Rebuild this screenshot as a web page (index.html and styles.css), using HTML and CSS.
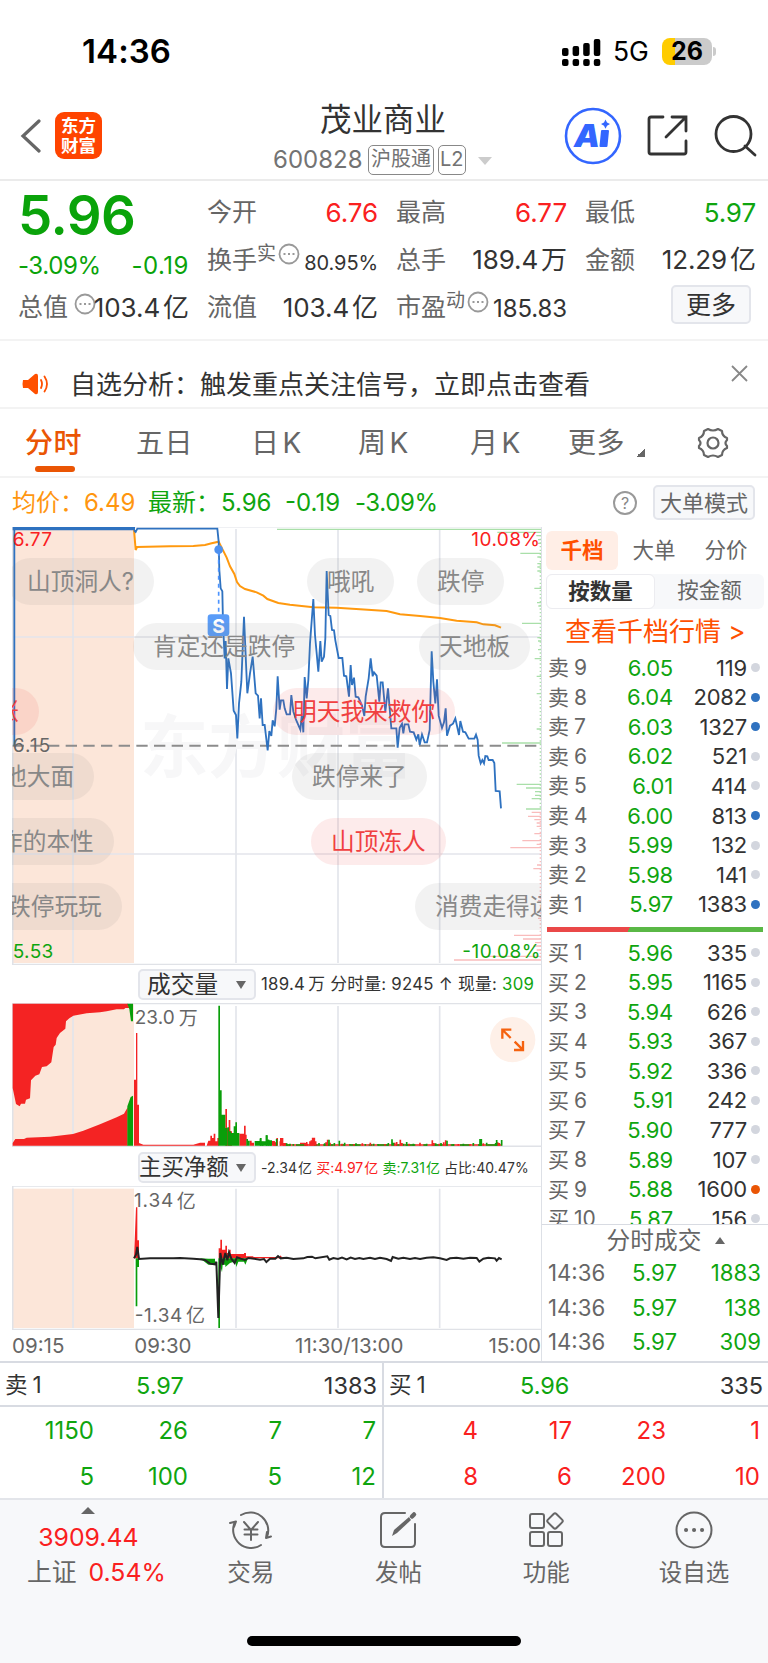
FILE: index.html
```html
<!DOCTYPE html>
<html lang="zh-CN">
<head>
  <meta charset="UTF-8" />
  <meta name="viewport" content="width=device-width, initial-scale=1.0"/>
  <title>茂业商业 600828</title>
  <link rel="stylesheet" href="styles.css">
</head>
<body>
  <div class="status-bar">
    <span class="clock">14:36</span>
    <svg class="signal" width="39" height="28" viewBox="0 0 39 28">
      <rect x="0" y="10" width="6.5" height="8" rx="2"/><rect x="10.6" y="8" width="6.5" height="10" rx="2"/><rect x="21.2" y="5" width="6.5" height="13" rx="2"/><rect x="31.8" y="1" width="6.5" height="17" rx="2"/>
      <rect x="0" y="21" width="6.5" height="7" rx="2"/><rect x="10.6" y="21" width="6.5" height="7" rx="2"/><rect x="21.2" y="21" width="6.5" height="7" rx="2"/><rect x="31.8" y="21" width="6.5" height="7" rx="2"/>
    </svg>
    <span class="network">5G</span>
    <span class="battery">26</span>
    <span class="battery-tip"></span>
  </div>

  <header class="header">
    <svg class="back" width="22" height="34" viewBox="0 0 22 34"><path d="M19 2 3 17 19 32"/></svg>
    <div class="logo">东方<br>财富</div>
    <div class="title">
      <h1>茂业商业</h1>
      <div class="code"><span class="code-num">600828</span><span class="badge">沪股通</span><span class="badge">L2</span><i class="tri-down"></i></div>
    </div>
    <svg class="ai" width="58" height="58" viewBox="0 0 58 58">
      <circle cx="29" cy="29" r="27" fill="none" stroke="#3366ff" stroke-width="2.6"/>
      <text x="10" y="40" textLength="26" lengthAdjust="spacingAndGlyphs">A</text>
      <path d="M38 24h6l-1.500 15h-6z" fill="#3366ff" stroke="#3366ff" stroke-width="2" stroke-linejoin="round"/>
      <path d="M41.500 12.500l1.500 3 3 1.600-3 1.600-1.500 3-1.500-3-3-1.600 3-1.600z" fill="#3366ff"/>
    </svg>
    <svg class="share" width="42" height="42" viewBox="0 0 42 42"><path d="M16 2H4q-2 0-2 2V37q0 2 2 2H37q2 0 2-2V26M25 2H39V16M39 2 19 22"/></svg>
    <svg class="search" width="43" height="43" viewBox="0 0 43 43"><circle cx="19.500" cy="20" r="17.500"/><path d="M31 32 41 41"/></svg>
  </header>

  <section class="quote">
    <div class="price-box">
      <div class="price">5.96</div>
      <div class="change"><span>-3.09%</span><span class="amount">-0.19</span></div>
    </div>
    <div class="item"><label>今开</label><b class="red">6.76</b></div>
    <div class="item"><label>最高</label><b class="red">6.77</b></div>
    <div class="item"><label>最低</label><b class="green">5.97</b></div>
    <div class="item"><label>换手<sup>实</sup></label><svg class="dots" width="22" height="22" viewBox="0 0 22 22"><circle cx="11" cy="11" r="9.500"/><path d="M5.500 11h2M10 11h2M14.500 11h2"/></svg><b class="small">80.95%</b></div>
    <div class="item"><label>总手</label><b>189.4<u>万</u></b></div>
    <div class="item"><label>金额</label><b>12.29<u>亿</u></b></div>
    <div class="item"><label>总值</label><svg class="dots value-dots" width="22" height="22" viewBox="0 0 22 22"><circle cx="11" cy="11" r="9.500"/><path d="M5.500 11h2M10 11h2M14.500 11h2"/></svg><b>103.4<u>亿</u></b></div>
    <div class="item"><label>流值</label><b>103.4<u>亿</u></b></div>
    <div class="item"><label>市盈<sup>动</sup></label><svg class="dots" width="22" height="22" viewBox="0 0 22 22"><circle cx="11" cy="11" r="9.500"/><path d="M5.500 11h2M10 11h2M14.500 11h2"/></svg><b class="pe">185.83</b></div>
    <div class="item last"><button class="more">更多</button></div>
  </section>

  <section class="notice">
    <svg width="27" height="22" viewBox="0 0 27 22"><path d="M1 7h5l7-6q3-1 3 2v16q0 3-3 2l-7-6H1q-1-4 0-8z" fill="#ff5000"/><path d="M19 7q2 4 0 8M22.500 3.500q5 7.500 0 15" fill="none" stroke="#ff5000" stroke-width="1.800" stroke-linecap="round"/></svg>
    <p>自选分析：触发重点关注信号，立即点击查看</p>
    <svg class="close" width="17" height="17" viewBox="0 0 17 17"><path d="M1 1 16 16M16 1 1 16"/></svg>
  </section>

  <nav class="tabs">
    <a class="active">分时</a><a>五日</a><a>日<em>K</em></a><a>周<em>K</em></a><a>月<em>K</em></a><a>更多</a><i class="corner"></i>
    <svg class="gear" width="34" height="32" viewBox="0 0 34 32"><path d="M12 2Q17 5 22 2L26 4Q26 9 31 11V13Q28 16 31 19V21Q26 23 26 28L22 30Q17 27 12 30L8 28Q8 23 3 21V19Q6 16 3 13V11Q8 9 8 4Z"/><circle cx="17" cy="16" r="5.500"/></svg>
  </nav>

  <div class="avg-line">
    <span class="orange">均价：</span><span class="orange avg">6.49</span>
    <span class="green">最新：</span><span class="green now">5.96</span><span class="green diff">-0.19</span><span class="green pct">-3.09%</span>
    <span class="help">?</span>
    <button class="mode">大单模式</button>
  </div>

  <main class="main">
    <div class="charts">
      <div class="price-chart">
        <svg width="530" height="438" viewBox="36 36 1590 1314">
          <rect x="38" y="36" width="364" height="1308" fill="#fce6d9"/>
          <path class="grid" d="M219 42V1344M708 42V1344M1014 42V1344M1319 42V1344M38 366H1622M38 1017H1622"/>
          <path class="frame" d="M36 35H1626M38 35V1350M36 1349H1626"/>
          <text class="watermark" x="420" y="770">东方财富</text>
          <path class="mid" d="M38 692H1622"/>
          <g transform="translate(600 0)">
            <path class="depth-green" d="M231 43H1025M892 52H1025M961 115H1025M1003 220H1025M966 325H1025M1004 431H1025M1010 484H1025M1010 536H1025M1010 642H1025M906 684H1025M950 808H1025M978 819H1025M1005 830H1025M1005 841H1025M995 851H1025M978 882H1025M1009 62H1025M1014 74H1025M1014 85H1025M1012 126H1025M1012 146H1025M1012 156H1025M1012 168H1025M1011 263H1025M1015 273H1025M1012 368H1025M1014 378H1025M1014 404H1025"/>
            <path class="depth-dots" d="M1022 60V880"/>
            <path class="depth-red" d="M995 892H1025M984 904H1025M1003 914H1025M1010 924H1025M1010 934H1025M1003 956H1025M967 977H1025M1010 988H1025M931 998H1025M1011 1050H1025M1000 1061H1025M1014 1146H1025M1014 1157H1025M1014 1210H1025M942 1261H1025M969 1272H1025M1005 1283H1025M1000 1293H1025M1010 1305H1025M860 1324H1025M762 1335H1025"/>
            <path class="depth-dots-red" d="M1022 895V1330"/>
          </g>
          <path class="avg-path" d="M402 44 407 105 411 96 510 94 580 93 615 90 635 85 656 80 665 98 680 128 690 154 703 177 711 201 720 213 735 222 770 232 790 242 802 252 835 264 870 269 905 273 940 277 1010 278 1080 283 1160 288 1200 298 1260 303 1320 309 1370 317 1430 322 1450 328 1485 331 1503 338"/>
          <path class="price-path" d="M43 692V44"/>
          <path class="auction-path" d="M38 41H405"/>
          <path class="price-path" d="M402 46 407 51 412 41H652L656 80 658 165 662 220 667 229 669 325 674 430 677 378 681 522 685 430 693 475 701 587 708 600 712 670 717 566 724 500 732 305 738 445 742 535 750 475 758 425 767 535 774 542 779 610 783 550 788 630 794 630 803 706 808 648 814 663 818 616 824 634 829 580 833 484 839 584 843 556 850 556 854 580 860 598 870 598 874 540 880 590 888 614 901 644 906 596 910 652 914 486 920 550 925 495 930 385 940 252 945 360 955 470 961 378 965 440 972 425 976 370 980 168 986 300 991 303 996 345 1002 346 1006 376 1016 429 1027 429 1032 482 1039 484 1047 545 1052 450 1056 510 1062 488 1067 545 1075 547 1086 571 1093 603 1097 545 1106 490 1112 430 1118 484 1122 472 1130 482 1138 560 1142 502 1148 502 1156 590 1164 520 1174 640 1189 640 1193 698 1199 638 1206 626 1210 655 1214 628 1225 628 1230 650 1241 652 1249 674 1255 658 1259 690 1266 658 1274 682 1281 682 1289 645 1295 409 1300 500 1306 565 1311 493 1316 602 1326 639 1332 622 1337 580 1341 662 1350 632 1359 626 1366 610 1377 660 1381 618 1389 650 1396 652 1406 671 1423 671 1428 659 1433 675 1436 722 1442 745 1447 735 1452 745 1456 723 1462 724 1466 735 1478 735 1483 744 1487 828 1499 829 1503 880"/>
          <path d="M656 110V300" stroke="#4d94ff" stroke-width="5" stroke-dasharray="12 12"/>
          <circle cx="656" cy="104" r="13" fill="#4d90f0"/>
          <rect x="623" y="298" width="65" height="65" rx="10" fill="#5a9cf8"/>
          <text class="sell-flag" x="656" y="353">S</text>
          <text class="lab" x="38" y="92" fill="#fa2020" textLength="118">6.77</text>
          <text class="lab" x="38" y="710" fill="#666" textLength="113">6.15</text>
          <text class="lab" x="38" y="1328" fill="#0fa50f" textLength="122">5.53</text>
          <text class="lab" x="1414" y="92" fill="#fa2020" textLength="206">10.08%</text>
          <text class="lab" x="1387" y="1328" fill="#0fa50f" textLength="234">-10.08%</text>
        </svg>
        <span class="danmu d1">山顶洞人?</span>
        <span class="danmu d2">哦吼</span>
        <span class="danmu d3">跌停</span>
        <span class="danmu d4">肯定还是跌停</span>
        <span class="danmu d5">天地板</span>
        <span class="danmu hot d6">涨</span>
        <span class="danmu hot d7">明天我来救你</span>
        <span class="danmu d8">他大面</span>
        <span class="danmu d9">跌停来了</span>
        <span class="danmu d10">作的本性</span>
        <span class="danmu hot d11">山顶冻人</span>
        <span class="danmu d12">跌停玩玩</span>
        <span class="danmu d13">消费走得远</span>
      </div>

      <div class="sub-bar">
        <button class="select"><span>成交量</span><i></i></button>
        <p class="vol-info">189.4<u>万</u> 分时量: 9245 ↑ 现量: <span class="green">309</span></p>
      </div>
      <div class="vol-chart">
        <svg width="530" height="144" viewBox="36 130 1590 432">
          <rect x="38" y="132" width="364" height="426" fill="#fce6d9"/>
          <path class="grid" d="M219 132V558M708 139V558M1014 139V558M1319 139V558"/>
          <path class="frame" d="M38 130V560M36 131H1626M36 560H1626"/>
          <path class="fill-red" d="M38 132H384L388 145 376 145 372 149 350 149 320 155 300 158 260 161 220 168 208 176 198 185 196 207 180 220 170 235 167 255 161 262 154 308 140 320 126 322 118 344 106 348 93 362 90 416 78 420 75 432 63 432 59 440 48 433 38 385ZM38 558V550L46 538 72 538 80 534 150 531 219 523 250 513 300 494 350 473 372 462 383 443V558Z"/>
          <path class="fill-green" d="M382 132H399V185H393L388 148ZM382 558V440L392 412 399 408V558Z"/>
          <path class="fill-red" d="M402 558V360H408V220H412V435H417V550L430 555H580L600 549H615V558ZM620 558 625 543 631 543V528H636V535H641V522H646V545H652V535H657V558ZM676 558V448H681V505H686V481H691V515H696V558ZM718 558V522H732V498H737V525H740V558ZM749 558V543H755V549H762V558ZM816 558V544H824V549H829V535H834V558ZM840 558V535H850V550H860V558ZM900 558V549H915V552H925V558Z"/>
          <path class="fill-green" d="M655 558V138H660V392H665V465H676V505H681V558ZM682 558V503H687V515H693V520H701V500H706V488H711V520H718V558ZM739 558V538H744V543H749V558ZM764 558V544H780V535H784V548H797V528H802V540H807V548H814V558ZM779 558V537H784V545H797V527H803V542H816V558Z"/>
          <path class="base-red" d="M850 556H1505"/><path class="base-green" d="M860 556H1505"/>
          <path class="bar-red" d="M822 558V544M827 558V548M841 558V545M850 558V550M915 558V550M920 558V547M930 558V545M934 558V542M938 558V534M943 558V534M947 558V545M978 558V548M983 558V540M990 558V549M1026 558V552M1062 558V553M1087 558V551M1111 558V549M1155 558V553M1184 558V549M1190 558V547M1201 558V540M1206 558V550M1227 558V552M1260 558V549M1297 558V542M1302 558V550M1318 558V552M1331 558V548M1337 558V542M1375 558V553M1410 558V553M1450 558V551M1493 558V548M1498 558V550"/>
          <path class="bar-green" d="M782 558V535M788 558V546M800 558V527M806 558V540M812 558V545M830 558V538M860 558V551M870 558V552M880 558V553M957 558V550M974 558V551M987 558V540M1003 558V550M1018 558V543M1034 558V549M1050 558V553M1068 558V551M1096 558V553M1121 558V552M1134 558V553M1165 558V550M1176 558V539M1180 558V549M1211 558V552M1220 558V547M1240 558V552M1280 558V552M1307 558V551M1323 558V550M1341 558V543M1360 558V553M1390 558V552M1420 558V550M1440 558V538M1444 558V538M1460 558V549M1487 558V550M1490 558V541M1505 558V541"/>
          <text class="lab gray" x="404" y="194" textLength="120">23.0</text><text class="lab gray" x="536" y="196">万</text>
          <circle cx="1538" cy="240" r="68" fill="#fef0e8"/>
          <path class="expand" d="M1507 237V210H1534M1508 211 1532 235M1544 246 1568 270M1542 271H1569V244"/>
        </svg>
      </div>

      <div class="sub-bar">
        <button class="select tight"><span>主买净额</span><i></i></button>
        <p class="net-info">-2.34<u>亿</u> <span class="red">买:4.97<u>亿</u></span> <span class="green">卖:7.31<u>亿</u></span> 占比:40.47%</p>
      </div>
      <div class="net-chart">
        <svg width="530" height="144" viewBox="36 679 1590 432">
          <rect x="38" y="687" width="364" height="418" fill="#fce6d9"/>
          <path class="grid" d="M219 687V1105M708 687V1105M1014 687V1105M1319 687V1105"/>
          <path class="frame" d="M38 679V1111M36 679H1626M36 1110H1626"/>
          <path class="fill-red" d="M402 896 408 743H412V842H417V896ZM656 896V866H661V840H666V870H676V858H681V880H687V870H692V883H732V880H738V890H760V892H840V887L850 896Z"/>
          <path class="fill-green" d="M407 896V1040H412V922H417V896ZM600 896 625 897H645V915H625ZM655 896V1105H660V915L666 938 668 915H676V922L690 910 706 905 709 922 715 906 732 906 736 915 744 896Z"/>
          <path class="net-line" d="M402 896 408 885 412 862 417 898 450 896 520 896 540 895 580 897 600 899 615 901 630 912 645 914 649 906 655 1075 661 880 668 915 676 880 682 902 687 878 694 897 704 910 711 893 722 897 735 901 745 895 780 900 792 898 799 907 810 897 826 897 834 889 842 896 860 894 880 898 910 896 922 892 936 891 946 896 982 890 988 900 1000 895 1014 898 1026 894 1040 899 1052 894 1065 898 1078 895 1090 898 1110 894 1125 898 1140 894 1160 898 1173 904 1178 892 1195 897 1210 894 1230 898 1245 895 1260 898 1280 894 1300 893 1320 896 1340 901 1350 896 1370 894 1390 897 1410 894 1430 895 1438 906 1450 897 1465 894 1485 896 1490 903 1497 895 1505 899"/>
          <text class="lab gray" x="402" y="743" textLength="118">1.34</text><text class="lab gray" x="530" y="745">亿</text>
          <text class="lab gray" x="404" y="1086" textLength="143">-1.34</text><text class="lab gray" x="558" y="1088">亿</text>
        </svg>
      </div>
      <div class="axis"><span>09:15</span><span class="open">09:30</span><span class="noon">11:30/13:00</span><span>15:00</span></div>
    </div>

    <aside class="book">
      <div class="book-tabs"><a class="active">千档</a><a>大单</a><a>分价</a></div>
      <div class="segment"><a class="active">按数量</a><a>按金额</a></div>
      <a class="deep-link">查看千档行情 &gt;</a>
      <ul class="levels">
        <li><span>卖<q>9</q></span><b>6.05</b><em>119</em><i></i></li>
        <li><span>卖<q>8</q></span><b>6.04</b><em>2082</em><i class="blue"></i></li>
        <li><span>卖<q>7</q></span><b>6.03</b><em>1327</em><i class="blue"></i></li>
        <li><span>卖<q>6</q></span><b>6.02</b><em>521</em><i></i></li>
        <li><span>卖<q>5</q></span><b>6.01</b><em>414</em><i></i></li>
        <li><span>卖<q>4</q></span><b>6.00</b><em>813</em><i class="blue"></i></li>
        <li><span>卖<q>3</q></span><b>5.99</b><em>132</em><i></i></li>
        <li><span>卖<q>2</q></span><b>5.98</b><em>141</em><i></i></li>
        <li><span>卖<q>1</q></span><b>5.97</b><em>1383</em><i class="blue"></i></li>
      </ul>
      <div class="ratio"></div>
      <ul class="levels bids">
        <li><span>买<q>1</q></span><b>5.96</b><em>335</em><i></i></li>
        <li><span>买<q>2</q></span><b>5.95</b><em>1165</em><i></i></li>
        <li><span>买<q>3</q></span><b>5.94</b><em>626</em><i></i></li>
        <li><span>买<q>4</q></span><b>5.93</b><em>367</em><i></i></li>
        <li><span>买<q>5</q></span><b>5.92</b><em>336</em><i></i></li>
        <li><span>买<q>6</q></span><b>5.91</b><em>242</em><i></i></li>
        <li><span>买<q>7</q></span><b>5.90</b><em>777</em><i></i></li>
        <li><span>买<q>8</q></span><b>5.89</b><em>107</em><i></i></li>
        <li><span>买<q>9</q></span><b>5.88</b><em>1600</em><i class="hot"></i></li>
        <li><span>买<q>10</q></span><b>5.87</b><em>156</em><i></i></li>
      </ul>
      <div class="deal-title">分时成交<i></i></div>
      <ul class="deals">
        <li><span>14:36</span><b>5.97</b><em>1883</em></li>
        <li><span>14:36</span><b>5.97</b><em>138</em></li>
        <li><span>14:36</span><b>5.97</b><em>309</em></li>
      </ul>
    </aside>
  </main>

  <section class="queue">
    <div class="side">
      <div class="side-head"><span>卖<q>1</q></span><b>5.97</b><em>1383</em></div>
      <div class="cells green"><span>1150</span><span>26</span><span>7</span><span>7</span><span>5</span><span>100</span><span>5</span><span>12</span></div>
    </div>
    <div class="side">
      <div class="side-head"><span>买<q>1</q></span><b>5.96</b><em>335</em></div>
      <div class="cells red"><span>4</span><span>17</span><span>23</span><span>1</span><span>8</span><span>6</span><span>200</span><span>10</span></div>
    </div>
  </section>

  <footer class="toolbar">
    <div class="index">
      <i></i>
      <div class="red">3909.44</div>
      <div><span>上证</span><span class="red idx-pct">0.54%</span></div>
    </div>
    <div class="tool">
      <svg width="44" height="40" viewBox="0 0 44 40"><path d="M12 5A18 18 0 0 1 38 27M32 35A18 18 0 0 1 6 12M1 13 7 11.500 5 17M37 28 42 26.500M38 22 37 28"/><path d="M15 12 22 20 29 12M22 20V30M15.500 19.500H28.500M15.500 24.500H28.500"/></svg>
      <span>交易</span>
    </div>
    <div class="tool">
      <svg width="44" height="40" viewBox="0 0 44 40"><path d="M29 3H9Q5 3 5 7V33Q5 37 9 37H35Q39 37 39 33V14"/><path d="M16 26 18 20 33 7 35 10 21 23Z" fill="#666" stroke="none"/><path d="M36 6.500 38 4.500" stroke-width="4.500"/></svg>
      <span>发帖</span>
    </div>
    <div class="tool">
      <svg width="44" height="40" viewBox="0 0 44 40"><rect x="6" y="4" width="14" height="14" rx="2"/><rect x="6" y="22" width="14" height="14" rx="2"/><rect x="24" y="22" width="14" height="14" rx="2"/><rect x="25" y="5" width="12" height="12" rx="2" transform="rotate(45 31 11)"/></svg>
      <span>功能</span>
    </div>
    <div class="tool">
      <svg width="44" height="40" viewBox="0 0 44 40"><circle cx="22" cy="20" r="17.500"/><path d="M14 20h.1M22 20h.1M30 20h.1" stroke-width="4"/></svg>
      <span>设自选</span>
    </div>
  </footer>
  <div class="home"><span></span></div>
</body>
</html>
```
FILE: styles.css
```css
* {
  box-sizing: border-box;
}
body {
  margin: 0;
  width: 768px;
  height: 1663px;
  overflow: hidden;
  background: #fff;
  color: #333;
  font-family: Inter, "Noto Sans CJK SC", sans-serif;
  font-size: 24px;
  line-height: 1;
}
h1, p, ul {
  margin: 0;
  padding: 0;
  font-weight: normal;
}
ul {
  list-style: none;
}
b, em, i, u {
  font-weight: normal;
  font-style: normal;
  text-decoration: none;
}
u {
  margin-left: 3px;
}
q {
  quotes: none;
  margin-left: 5px;
}
button {
  padding: 0;
  border: 2px solid #e3e5eb;
  border-radius: 5px;
  background: #f7f8fa;
  color: #333;
  font-family: inherit;
  line-height: 1;
}
svg {
  display: block;
  flex: none;
}
.red {
  color: #fa2020;
}
.green {
  color: #0fa50f;
}
.orange {
  color: #ff960f;
}

/* status bar */
.status-bar {
  display: flex;
  align-items: center;
  height: 100px;
  padding: 3px 52px 0 82px;
  color: #000;
}
.clock {
  flex: 1;
  font-size: 33px;
  font-weight: 600;
  letter-spacing: 0.1px;
}
.signal {
  margin-right: 12px;
}
.network {
  width: 49px;
  font-size: 26.500px;
}
.battery {
  width: 50px;
  height: 27px;
  border-radius: 8px;
  background: linear-gradient(90deg, #ffcc00 13px, #cbcbcb 13px);
  font-size: 25px;
  font-weight: 700;
  line-height: 27px;
  text-align: center;
}
.battery-tip {
  width: 3px;
  height: 9px;
  margin-left: 1px;
  border-radius: 0 3px 3px 0;
  background: #cbcbcb;
}

/* header */
.header {
  display: flex;
  align-items: center;
  height: 81px;
  padding-left: 20px;
  border-bottom: 2px solid #ebebeb;
}
.back {
  margin-top: -8px;
  fill: none;
  stroke: #666;
  stroke-width: 3.2;
  stroke-linecap: round;
}
.logo {
  width: 47px;
  height: 47px;
  margin: -9px 0 0 13px;
  padding-top: 4px;
  border-radius: 9px;
  background: #ff4400;
  color: #fff;
  font-size: 17.500px;
  font-weight: 700;
  line-height: 20px;
  text-align: center;
}
.title {
  width: 462px;
  padding-left: 171px;
  margin-top: 1px;
}
h1 {
  padding-left: 47px;
  font-size: 31.500px;
  line-height: 40px;
}
.code {
  display: flex;
  align-items: center;
  height: 41px;
  color: #737373;
}
.code-num {
  width: 95px;
  font-size: 24px;
}
.badge {
  height: 30px;
  margin-right: 4px;
  padding: 0 2px;
  border: 1.500px solid #888;
  border-radius: 5px;
  font-size: 20px;
  line-height: 27px;
}
.badge:nth-child(3) {
  padding: 0 1px;
}
.tri-down {
  margin: 1px 0 0 8px;
  border: 7px solid transparent;
  border-top: 8px solid #ccc;
  border-bottom: 0;
}
.ai {
  margin-top: -8px;
}
.ai text {
  font-size: 31px;
  font-weight: 900;
  font-style: italic;
  fill: #3366ff;
}
.share, .search {
  margin: -8px 0 0 25px;
  fill: none;
  stroke: #333;
  stroke-width: 2.800;
  stroke-linecap: round;
}

/* quote */
.quote {
  display: grid;
  grid-template-columns: repeat(4, 171px);
  grid-template-rows: repeat(3, 47.500px);
  column-gap: 18px;
  height: 160px;
  padding: 8px 0 0 18px;
  border-bottom: 2px solid #f3f3f3;
}
.price-box {
  grid-row: span 2;
  color: #0aa30a;
}
.price {
  height: 56px;
  font-size: 54.500px;
  font-weight: 600;
  line-height: 53px;
  letter-spacing: -0.5px;
}
.change {
  display: flex;
  justify-content: space-between;
  line-height: 42px;
  letter-spacing: -0.4px;
}
.amount {
  letter-spacing: 0.5px;
}
.item {
  display: flex;
  align-items: center;
}
.item label {
  flex: none;
  font-size: 25px;
  color: #666;
  white-space: nowrap;
}
.item sup {
  font-size: 19px;
  line-height: 0;
  vertical-align: 9px;
}
.item b {
  margin-left: auto;
  font-size: 26px;
  letter-spacing: -0.1px;
  white-space: nowrap;
}
.item .small {
  font-size: 20px;
  padding-top: 5px;
}
.item .pe {
  font-size: 24px;
  padding-top: 3px;
}
.dots {
  margin: -12px 0 0 2px;
  fill: none;
  stroke: #999;
  stroke-width: 1.800;
}
.value-dots {
  margin: -8px -5px 0 6px;
}
.last {
  justify-content: flex-end;
}
.more {
  width: 80px;
  height: 39px;
  margin: -6px 5px 0 0;
  padding-top: 2px;
  font-size: 25px;
}

/* notice */
.notice {
  display: flex;
  align-items: center;
  height: 68px;
  padding: 19px 20px 0 22px;
  border-bottom: 2px solid #f3f3f3;
}
.notice p {
  flex: 1;
  padding: 2px 0 0 21px;
  font-size: 26px;
}
.close {
  margin-top: -21px;
  fill: none;
  stroke: #888;
  stroke-width: 1.800;
}

/* tabs */
.tabs {
  display: flex;
  align-items: center;
  height: 69px;
  padding-left: 25px;
  border-bottom: 2px solid #f3f3f3;
  color: #666;
  font-size: 28px;
}
.tabs a {
  width: 114px;
  line-height: 56px;
  letter-spacing: 0.5px;
}
.tabs a:nth-child(2) {
  width: 112px;
  margin-left: -3px;
}
.tabs a:nth-child(3) {
  width: 107px;
  margin-left: 3px;
}
.tabs a:nth-child(4) {
  width: 112px;
}
.tabs a:nth-child(5) {
  width: 98px;
}
.tabs a:nth-child(6) {
  width: 68px;
}
.tabs em {
  margin-left: 3px;
}
.tabs .active {
  position: relative;
  color: #ea5504;
  font-weight: 500;
}
.tabs .active::after {
  content: "";
  position: absolute;
  left: 10px;
  bottom: -1px;
  width: 40px;
  height: 6px;
  border-radius: 3px;
  background: #ea5504;
}
.corner {
  width: 9px;
  height: 9px;
  margin-top: 20px;
  background: linear-gradient(135deg, transparent 50%, #666 50%);
}
.gear {
  margin-left: 51px;
  fill: none;
  stroke: #666;
  stroke-width: 2.200;
  stroke-linejoin: round;
}

/* average line */
.avg-line {
  display: flex;
  align-items: center;
  height: 49px;
  padding: 0 13px 0 12px;
  font-size: 24px;
}
.avg {
  width: 64px;
}
.now {
  margin-left: 1px;
  width: 64px;
}
.diff {
  width: 70px;
}
.pct {
  letter-spacing: -0.4px;
}
.help {
  width: 24px;
  height: 24px;
  margin: 0 16px 0 auto;
  border: 2px solid #999;
  border-radius: 50%;
  color: #888;
  font-size: 16px;
  line-height: 20px;
  text-align: center;
}
.mode {
  width: 102px;
  height: 35px;
  color: #666;
  font-size: 22px;
}

/* charts */
.main {
  display: flex;
  height: 834px;
}
.charts {
  width: 542px;
  padding-left: 12px;
  border-right: 1px solid #dde0e6;
}
.price-chart {
  position: relative;
  height: 439px;
  overflow: hidden;
}
.grid {
  fill: none;
  stroke: #e3e5eb;
  stroke-width: 5;
}
.frame {
  fill: none;
  stroke: #e0e2e7;
  stroke-width: 5;
}
.watermark {
  font-size: 205px;
  font-weight: 700;
  fill: #f7f7f8;
}
.mid {
  stroke: #8c8c8c;
  stroke-width: 6;
  stroke-dasharray: 34 19;
}
.depth-green {
  stroke: #a9dfa9;
  stroke-width: 4;
}
.depth-red {
  stroke: #f9bcbc;
  stroke-width: 4;
}
.depth-dots {
  stroke: #a9dfa9;
  stroke-width: 6;
  stroke-dasharray: 4 7;
}
.depth-dots-red {
  stroke: #f9bcbc;
  stroke-width: 6;
  stroke-dasharray: 4 7;
}
.avg-path {
  fill: none;
  stroke: #ff990f;
  stroke-width: 6;
}
.price-path {
  fill: none;
  stroke: #2f72c0;
  stroke-width: 5.500;
}
.auction-path {
  stroke: #2f72c0;
  stroke-width: 10;
}
.sell-flag {
  font-size: 58px;
  font-weight: 700;
  fill: #fff;
  text-anchor: middle;
}
.lab {
  font-size: 57px;
}
.gray {
  fill: #666;
}
.danmu {
  position: absolute;
  height: 47px;
  padding: 0 20px;
  border-radius: 24px;
  background: rgba(128, 128, 128, 0.1);
  color: #888;
  font-size: 23.700px;
  line-height: 48px;
  white-space: nowrap;
}
.hot.danmu {
  background: rgba(240, 60, 60, 0.1);
  color: #f04040;
}
.d1, .d2, .d3 {
  top: 31px;
}
.d4, .d5 {
  top: 96px;
}
.d6, .d7 {
  top: 161px;
}
.d8, .d9 {
  top: 226px;
}
.d10, .d11 {
  top: 291px;
}
.d12, .d13 {
  top: 356px;
}
.d1 { left: -5px; }
.d2 { left: 295px; }
.d3 { left: 405px; }
.d4 { left: 121px; }
.d5 { left: 407px; }
.d6 { left: -37px; }
.d7 { left: 261px; }
.d8 { left: -29px; }
.d9 { left: 280px; }
.d10 { left: -33px; }
.d11 { left: 299px; }
.d12 { left: -25px; }
.d13 { left: 403px; }
.sub-bar {
  display: flex;
  align-items: center;
  height: 37px;
  padding-left: 126px;
}
.vol-chart {
  height: 146px;
}
.net-chart {
  height: 145px;
}
.select {
  display: flex;
  align-items: center;
  justify-content: space-between;
  width: 118px;
  height: 31px;
  margin-right: 5px;
  padding: 0 8px 0 7px;
  font-size: 23.700px;
}
.select.tight {
  padding-left: 0;
  font-size: 22.400px;
}
.select.tight span {
  margin-left: -1px;
}
.select i {
  border: 5px solid transparent;
  border-top: 8px solid #666;
  border-bottom: 0;
}
.vol-info {
  font-size: 16.800px;
  letter-spacing: 0.250px;
  white-space: nowrap;
}
.net-info {
  font-size: 14px;
  letter-spacing: 0.050px;
  white-space: nowrap;
}
.net-info u {
  margin-left: 1px;
}
.expand {
  fill: none;
  stroke: #f5620f;
  stroke-width: 7;
}
.fill-red {
  fill: #f42323;
}
.fill-green {
  fill: #0a9e0a;
}
.bar-red, .base-red {
  stroke: #f42323;
  stroke-width: 5;
}
.bar-green, .base-green {
  stroke: #0a9e0a;
  stroke-width: 5;
}
.base-green {
  stroke-dasharray: 11 17 30 24;
}
.net-line {
  fill: none;
  stroke: #222;
  stroke-width: 6;
}
.axis {
  display: flex;
  align-items: center;
  height: 31px;
  color: #666;
  font-size: 20.500px;
}
.open {
  width: 56px;
  margin-left: 70px;
}
.noon {
  margin: 0 85px 0 auto;
}

/* order book */
.book {
  display: flex;
  flex-direction: column;
  width: 226px;
}
.book-tabs {
  display: flex;
  height: 44px;
  padding: 4px 0 0 4px;
  color: #666;
  font-size: 21.500px;
  line-height: 38px;
  text-align: center;
}
.book-tabs a {
  width: 72px;
}
.book-tabs a.active {
  height: 39px;
  border-radius: 6px;
  background: #ffeee6;
  color: #ff5000;
  font-weight: 700;
}
.segment {
  display: flex;
  width: 218px;
  height: 35px;
  margin: 3px 0 0 4px;
  border-radius: 6px;
  background: #f7f8fa;
  color: #666;
  font-size: 21.500px;
  line-height: 33px;
  text-align: center;
}
.segment a {
  width: 109px;
}
.segment a.active {
  border: 1.500px solid #ececf0;
  border-radius: 6px;
  background: #fff;
  color: #333;
  font-weight: 700;
}
.deep-link {
  height: 44px;
  padding-left: 23px;
  color: #ff5000;
  font-size: 26px;
  line-height: 46px;
  white-space: nowrap;
}
.levels li {
  display: flex;
  align-items: center;
  height: 29.560px;
  padding-left: 6px;
  font-size: 22px;
}
.levels span {
  width: 54px;
  color: #666;
  font-size: 21px;
  white-space: nowrap;
}
.levels b {
  width: 71px;
  color: #0fa50f;
  text-align: right;
  letter-spacing: -0.2px;
}
.levels em {
  width: 74px;
  text-align: right;
  letter-spacing: -0.2px;
}
.levels i {
  width: 9px;
  height: 9px;
  margin-left: 4px;
  border-radius: 50%;
  background: #d3d6de;
}
.levels .blue {
  background: #2f72c0;
}
.levels .hot {
  background: #ea5504;
}
.ratio {
  height: 5px;
  margin: 8px 5px 0;
  background: linear-gradient(120deg, #ea4848 38%, #5ab846 38%);
}
.bids {
  height: 292px;
  padding-top: 6px;
  overflow: hidden;
}
.deal-title {
  display: flex;
  align-items: center;
  justify-content: center;
  height: 32px;
  border-top: 1.500px solid #d8dbe2;
  color: #666;
  font-size: 23.700px;
  padding-left: 22px;
}
.deal-title i {
  margin-left: 14px;
  border: 5px solid transparent;
  border-bottom: 7px solid #666;
  border-top: 0;
}
.deals li {
  display: flex;
  align-items: center;
  height: 34.600px;
  padding-left: 6px;
  font-size: 22.200px;
}
.deals span {
  width: 59px;
  color: #666;
}
.deals b {
  width: 70px;
  color: #0fa50f;
  text-align: right;
}
.deals em {
  width: 84px;
  color: #0fa50f;
  text-align: right;
}

/* order queue */
.queue {
  display: flex;
  height: 139px;
  border-top: 2px solid #d8dbe2;
  border-bottom: 2px solid #e3e5ea;
}
.side {
  width: 384px;
}
.side:first-child {
  border-right: 2px solid #d8dbe2;
}
.side-head {
  display: flex;
  align-items: center;
  height: 44px;
  padding: 3px 5px 0;
  border-bottom: 2px solid #d8dbe2;
  font-size: 23.500px;
}
.side-head span {
  width: 131px;
  font-size: 22.500px;
}
.side-head b {
  flex: 1;
  color: #0fa50f;
}
.cells {
  display: grid;
  grid-template-columns: repeat(4, 94px);
  grid-template-rows: 46px 46px;
  align-items: center;
  padding-top: 1px;
  text-align: right;
}

/* bottom toolbar */
.toolbar {
  display: flex;
  height: 110px;
  background: #f7f8fa;
  color: #666;
}
.index {
  width: 177px;
  display: flex;
  flex-direction: column;
  align-items: center;
  font-size: 24.800px;
  line-height: 35px;
}
.index i {
  margin: 7px 0 6px;
  border: 7px solid transparent;
  border-bottom: 7px solid #666;
  border-top: 0;
}
.index > div:last-child {
  padding-left: 16px;
}
.idx-pct {
  margin-left: 12px;
}
.tool {
  display: flex;
  flex-direction: column;
  align-items: center;
  width: 148px;
  padding-top: 10px;
  font-size: 23.500px;
  line-height: 45px;
}
.tool svg {
  fill: none;
  stroke: #666;
  stroke-width: 2;
  stroke-linecap: round;
  stroke-linejoin: round;
}
.home {
  height: 53px;
  padding: 26px 0 0 247px;
  background: #f7f8fa;
}
.home span {
  display: block;
  width: 274px;
  height: 10px;
  border-radius: 5px;
  background: #000;
}
```
